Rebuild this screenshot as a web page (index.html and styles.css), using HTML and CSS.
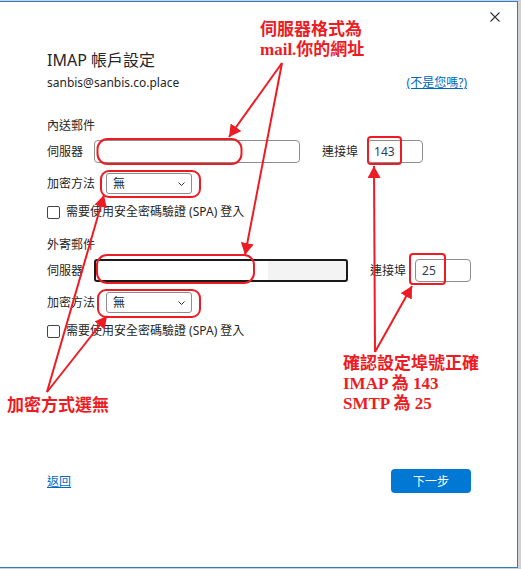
FILE: index.html
```html
<!doctype html>
<html>
<head>
<meta charset="utf-8">
<title>IMAP 帳戶設定</title>
  <link rel="stylesheet" href="styles.css">
</head>
<body>
  <div class="dialog">
    <div class="titlebar">
      <svg class="close" width="10" height="10" viewBox="0 0 10 10">
        <path d="M0.5 0.5 L9.5 9.5 M9.5 0.5 L0.5 9.5" stroke="#333" stroke-width="1.1" fill="none"/>
      </svg>
    </div>
    <div class="content">
      <h1 class="title">IMAP 帳戶設定</h1>
      <div class="account">
        <span>sanbis@sanbis.co.place</span>
        <a class="link not-me" href="#">(不是您嗎?)</a>
      </div>

      <!-- 內送 -->
      <section class="group incoming">
        <div class="group-name">內送郵件</div>
        <div class="row">
          <span class="lbl">伺服器</span>
          <div class="field server"></div>
          <span class="lbl port-lbl">連接埠</span>
          <div class="field port">143</div>
        </div>
        <div class="row">
          <span class="lbl">加密方法</span>
          <div class="select">無
            <svg width="7" height="4" viewBox="0 0 7 4"><path d="M0.5 0.5 L3.5 3.5 L6.5 0.5" stroke="#333" fill="none"/></svg>
          </div>
        </div>
        <div class="check"><span class="box"></span>需要使用安全密碼驗證 (SPA) 登入</div>
      </section>

      <!-- 外寄 -->
      <section class="group outgoing">
        <div class="group-name">外寄郵件</div>
        <div class="row">
          <span class="lbl">伺服器</span>
          <div class="field server wide focus"></div>
          <span class="lbl port-lbl">連接埠</span>
          <div class="field port">25</div>
        </div>
        <div class="row">
          <span class="lbl">加密方法</span>
          <div class="select">無
            <svg width="7" height="4" viewBox="0 0 7 4"><path d="M0.5 0.5 L3.5 3.5 L6.5 0.5" stroke="#333" fill="none"/></svg>
          </div>
        </div>
        <div class="check"><span class="box"></span>需要使用安全密碼驗證 (SPA) 登入</div>
      </section>

      <div class="footer">
        <a class="link" href="#">返回</a>
        <button class="next">下一步</button>
      </div>
    </div>
  </div>

  <!-- 紅色標註 -->
  <div class="overlay">
    <svg class="marks" width="521" height="569" viewBox="0 0 521 569">
      <defs>
        <marker id="head" markerUnits="userSpaceOnUse" markerWidth="13" markerHeight="13" refX="12" refY="6.5" orient="auto">
          <path d="M0 0 L12 6.5 L0 13 Z" fill="#ed1c24"/>
        </marker>
      </defs>
      <g fill="none" stroke="#ed1c24" stroke-width="2">
        <rect x="97.5" y="139" width="144" height="25" rx="10"/>
        <rect x="101" y="171" width="99" height="26" rx="8"/>
        <rect x="368" y="137" width="33" height="27" rx="3"/>
        <rect x="97" y="255" width="157" height="28" rx="10"/>
        <rect x="98" y="290" width="102" height="27" rx="8"/>
        <rect x="410" y="254" width="35" height="30" rx="3"/>

        <path d="M282 63 L229 137" marker-end="url(#head)"/>
        <path d="M282 63 L245 255" marker-end="url(#head)"/>
        <path d="M47 392 L104 195" marker-end="url(#head)"/>
        <path d="M47 392 L107 316" marker-end="url(#head)"/>
        <path d="M375 352 L374 166" marker-end="url(#head)"/>
        <path d="M375 352 L412 286" marker-end="url(#head)"/>
      </g>
    </svg>
    <div class="note note-server">伺服器格式為<br>mail.你的網址</div>
    <div class="note note-crypt">加密方式選無</div>
    <div class="note note-port">確認設定埠號正確<br>IMAP 為 143<br>SMTP 為 25</div>
  </div>
</body>
</html>
```

FILE: styles.css
```css
body {
  margin: 0;
  padding-top: 1px;
  background: #cfd1d3;
  font-family: "Noto Sans", "Noto Sans CJK TC", sans-serif;
  color: #262626;
}

.dialog {
  width: 518px;
  height: 567px;
  box-sizing: border-box;
  background: #fff;
  border: 1px solid #2b7bd0;
  border-left: none;
}

.titlebar {
  display: flex;
  justify-content: flex-end;
  padding: 10px 17px 0 0;
}
.close {
  display: block;
}

.content {
  padding: 0 46px 0 47px;
}

.title {
  margin: 27px 0 0;
  font-size: 16px;
  line-height: 22px;
  font-weight: 400;
}

.account {
  display: flex;
  justify-content: space-between;
  align-items: baseline;
  margin-top: 4px;
  font-size: 12px;
  line-height: 16px;
}

.link {
  color: #0067c0;
  font-size: 12px;
  text-decoration: underline;
}
.not-me {
  margin-right: 4px;
}

.group {
  font-size: 12px;
  line-height: 16px;
}
.incoming {
  margin-top: 27px;
}
.outgoing {
  margin-top: 17px;
}

.row {
  display: flex;
  align-items: center;
  gap: 11px;
  margin-top: 10px;
}
.group-name + .row {
  margin-top: 6px;
}

.lbl {
  flex-shrink: 0;
  white-space: nowrap;
}
.port-lbl {
  margin-left: 11px;
  margin-right: -2px;
}

.field {
  flex-shrink: 0;
  height: 23px;
  box-sizing: border-box;
  border: 1px solid #8d8d8d;
  border-radius: 4px;
  padding: 0 6px;
  display: flex;
  align-items: center;
}
.server {
  width: 206px;
}
.server.wide {
  width: 254px;
}
.field.focus {
  border: 2px solid #1a1a1a;
  border-radius: 3px;
  background: linear-gradient(to right, #fff 172px, #f3f3f3 172px);
}
.port {
  width: 56px;
  color: #2c3e55;
}

.select {
  width: 86px;
  height: 21px;
  box-sizing: border-box;
  border: 1px solid #8d8d8d;
  border-radius: 3px;
  padding: 0 6px;
  display: flex;
  align-items: center;
  justify-content: space-between;
}

.check {
  display: flex;
  align-items: center;
  gap: 6px;
  margin-top: 10px;
}
.box {
  width: 13px;
  height: 13px;
  box-sizing: border-box;
  border: 1px solid #444;
  border-radius: 2px;
}

.footer {
  display: flex;
  justify-content: space-between;
  align-items: center;
  margin-top: 130px;
}
.next {
  width: 80px;
  height: 24px;
  border: none;
  border-radius: 4px;
  background: #0078d4;
  color: #fff;
  font-family: inherit;
  font-size: 12px;
}

/* 標註層蓋在對話框上面 */
.overlay {
  position: absolute;
  left: 0;
  top: 0;
  width: 521px;
  height: 569px;
  pointer-events: none;
}
.marks {
  display: block;
}
.note {
  position: absolute;
  color: #ed1c24;
  font-family: "Liberation Serif", "Noto Sans CJK TC", serif;
  font-weight: 700;
  font-size: 17px;
  line-height: 20px;
  white-space: nowrap;
}
.note-server {
  left: 260px;
  top: 20px;
}
.note-crypt {
  left: 7px;
  top: 396px;
}
.note-port {
  left: 343px;
  top: 354px;
}
```
